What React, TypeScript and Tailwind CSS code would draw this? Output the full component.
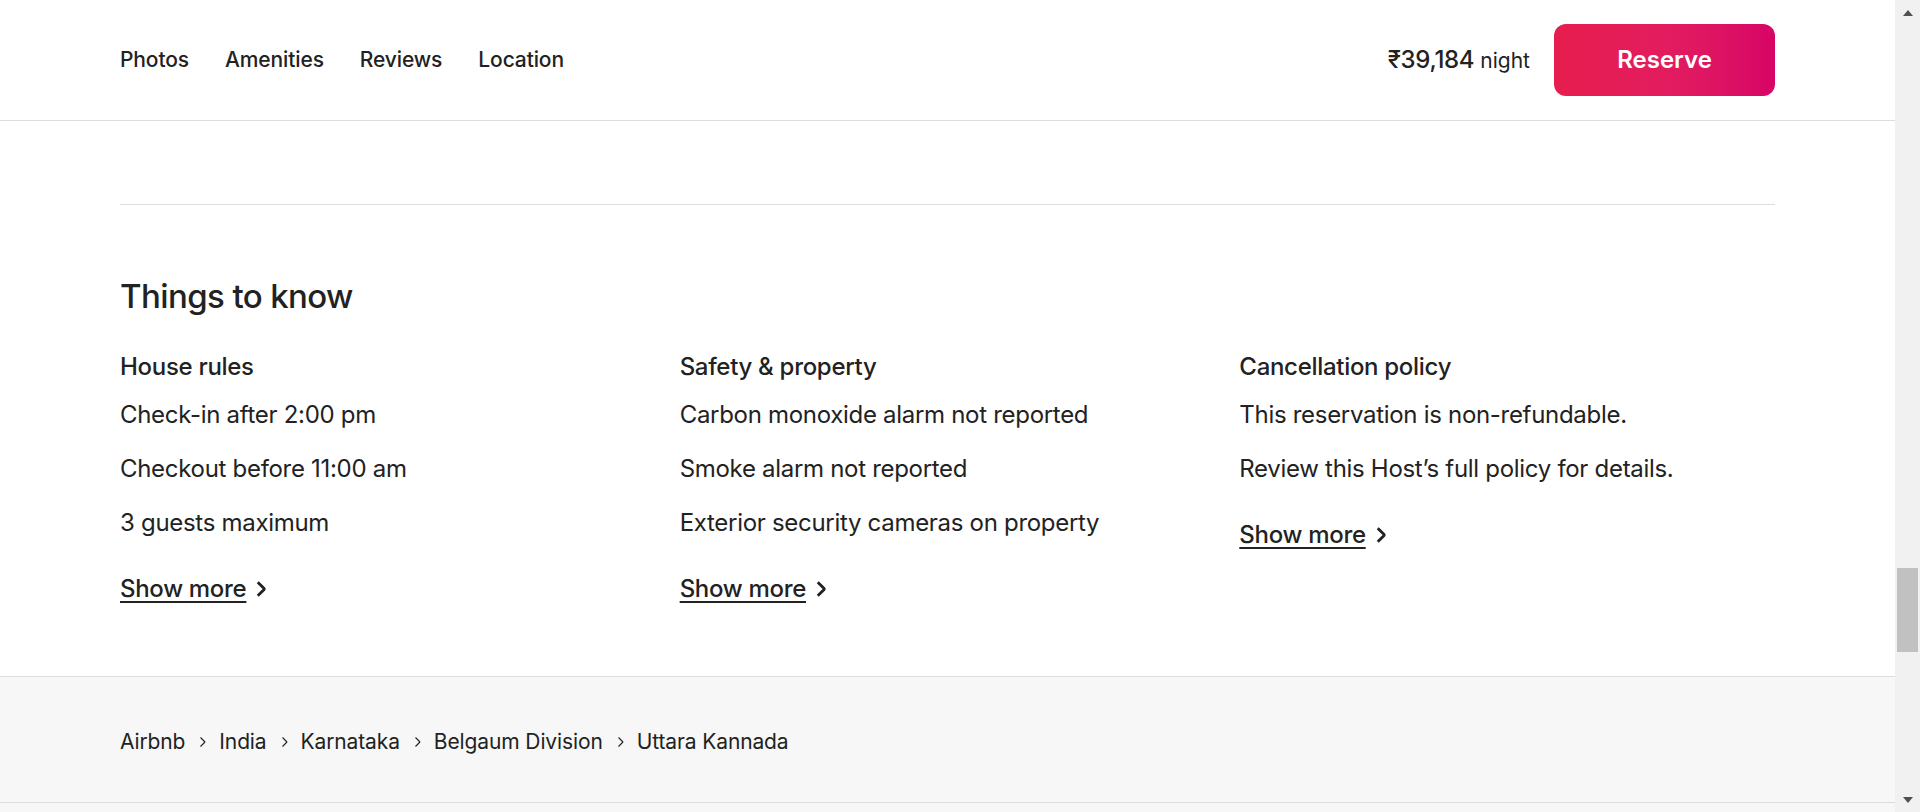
import type { ReactNode } from 'react';

const NAV = ['Photos', 'Amenities', 'Reviews', 'Location'];

const COLUMNAS: { titulo: string; items: string[] }[] = [
  {
    titulo: 'House rules',
    items: ['Check-in after 2:00 pm', 'Checkout before 11:00 am', '3 guests maximum'],
  },
  {
    titulo: 'Safety & property',
    items: [
      'Carbon monoxide alarm not reported',
      'Smoke alarm not reported',
      'Exterior security cameras on property',
    ],
  },
  {
    titulo: 'Cancellation policy',
    items: ['This reservation is non-refundable.', 'Review this Host’s full policy for details.'],
  },
];

const MIGAS = ['Airbnb', 'India', 'Karnataka', 'Belgaum Division', 'Uttara Kannada'];

function Chevron({ className, grosor }: { className: string; grosor: number }) {
  return (
    <svg viewBox="0 0 32 32" className={className} fill="none" stroke="currentColor" strokeWidth={grosor}>
      <path d="m12 4 11.3 11.3a1 1 0 0 1 0 1.4L12 28" />
    </svg>
  );
}

function ShowMore() {
  return (
    <button className="mt-[36px] flex items-center text-[24px] font-medium leading-[30px] tracking-[-0.3px]">
      <span className="underline decoration-[1.5px] underline-offset-[4px]">Show more</span>
      <Chevron className="ml-[5px] h-[18px] w-[18px]" grosor={5} />
    </button>
  );
}

function Columna({ titulo, items }: { titulo: string; items: string[] }) {
  return (
    <div className="flex flex-col items-start">
      <h3 className="text-[24px] font-medium leading-[30px] tracking-[-0.3px]">{titulo}</h3>
      <ul className="mt-[18px] flex flex-col gap-[24px] text-[24px] leading-[30px] tracking-[-0.3px]">
        {items.map((t) => (
          <li key={t}>{t}</li>
        ))}
      </ul>
      <ShowMore />
    </div>
  );
}

// barra de scroll "pintada", la captura está hecha con la página desplazada
function BarraScroll() {
  return (
    <aside className="flex w-[25px] shrink-0 flex-col items-center bg-[#f1f1f1]">
      <div className="flex h-[25px] items-center justify-center">
        <span className="h-0 w-0 border-x-[5.5px] border-b-[6px] border-x-transparent border-b-[#505050]" />
      </div>
      <div className="flex w-full flex-1 flex-col px-[2px] pt-[543px]">
        <div className="h-[84px] w-full bg-[#c1c1c1]" />
      </div>
      <div className="flex h-[25px] items-center justify-center">
        <span className="h-0 w-0 border-x-[5.5px] border-t-[6px] border-x-transparent border-t-[#505050]" />
      </div>
    </aside>
  );
}

function Cabecera({ children }: { children?: ReactNode }) {
  return (
    <header className="flex h-[121px] shrink-0 items-center justify-between border-b border-[#dddddd] px-[120px]">
      <nav className="flex gap-[36px] text-[21px] font-medium tracking-[-0.12px]">
        {NAV.map((n) => (
          <a key={n}>{n}</a>
        ))}
      </nav>
      {children}
    </header>
  );
}

export default function App() {
  return (
    <div className="flex h-[812px] overflow-hidden bg-white font-[Inter,'Liberation_Sans',sans-serif] text-[#222222]">
      <div className="flex min-w-0 flex-1 flex-col">
        <Cabecera>
          <div className="flex items-center gap-[24px]">
            <div className="flex items-baseline gap-[6px]">
              <span className="text-[24px] font-medium tracking-[-0.3px]">₹39,184</span>
              <span className="text-[21px]">night</span>
            </div>
            <button className="h-[72px] w-[221px] rounded-[12px] bg-gradient-to-r from-[#e61e4d] via-[#e31c5f] to-[#d70466] text-[24px] font-semibold text-white">
              Reserve
            </button>
          </div>
        </Cabecera>

        <main className="mx-[120px] mt-[83px] border-t border-[#dddddd] pb-[72px] pt-[72px]">
          <h2 className="text-[33px] font-medium leading-[39px] tracking-[-0.6px]">Things to know</h2>
          <div className="mt-[36px] grid grid-cols-3 gap-[24px]">
            {COLUMNAS.map((c) => (
              <Columna key={c.titulo} {...c} />
            ))}
          </div>
        </main>

        <footer className="flex-1 border-t border-[#dddddd] bg-[#f7f7f7]">
          <div className="border-b border-[#dddddd] px-[120px] pb-[46px] pt-[51px]">
            <ol className="flex items-center text-[21px] leading-[28px] tracking-[-0.12px]">
              {MIGAS.map((m, i) => (
                <li key={m} className="flex items-center">
                  {i > 0 && <Chevron className="mx-[11px] h-[12px] w-[12px]" grosor={3} />}
                  <a>{m}</a>
                </li>
              ))}
            </ol>
          </div>
        </footer>
      </div>
      <BarraScroll />
    </div>
  );
}
